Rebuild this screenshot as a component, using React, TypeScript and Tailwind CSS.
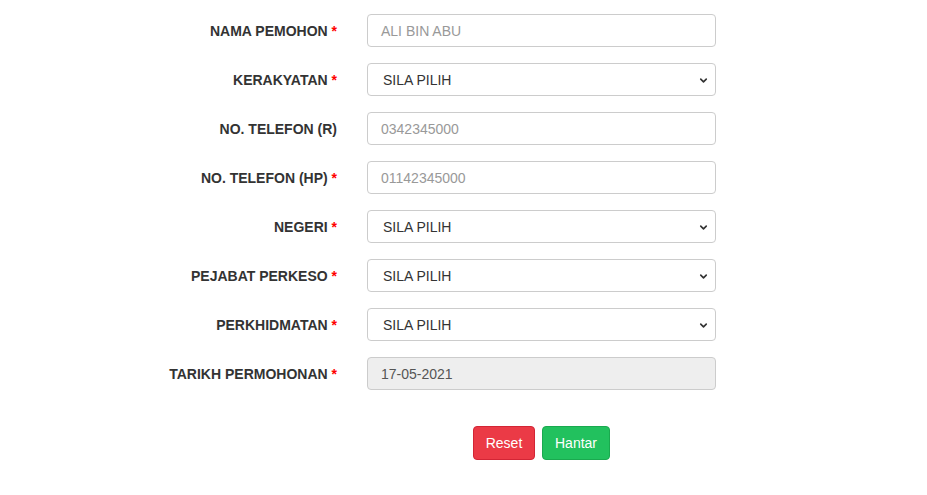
import { ChevronDown } from 'lucide-react';

type Field = {
  label: string;
  required: boolean;
  kind: 'text' | 'select' | 'disabled';
  value?: string;
};

const FIELDS: Field[] = [
  { label: 'NAMA PEMOHON', required: true, kind: 'text', value: 'ALI BIN ABU' },
  { label: 'KERAKYATAN', required: true, kind: 'select' },
  { label: 'NO. TELEFON (R)', required: false, kind: 'text', value: '0342345000' },
  { label: 'NO. TELEFON (HP)', required: true, kind: 'text', value: '01142345000' },
  { label: 'NEGERI', required: true, kind: 'select' },
  { label: 'PEJABAT PERKESO', required: true, kind: 'select' },
  { label: 'PERKHIDMATAN', required: true, kind: 'select' },
  { label: 'TARIKH PERMOHONAN', required: true, kind: 'disabled', value: '17-05-2021' },
];

function Control({ field }: { field: Field }) {
  if (field.kind === 'select') {
    return (
      <div className="relative w-[349px] h-[33px] rounded-[4px] border border-[#cccccc] bg-white flex items-center pl-[15px] pt-[1px] text-[14px] text-[#333]">
        SILA PILIH
        <ChevronDown className="absolute right-[6px] top-[11px] h-[11px] w-[11px] text-[#333]" strokeWidth={3.5} />
      </div>
    );
  }
  if (field.kind === 'disabled') {
    return (
      <div className="w-[349px] h-[33px] rounded-[4px] border border-[#cccccc] bg-[#eeeeee] flex items-center pl-[13px] pt-[1px] text-[14px] text-[#555]">
        {field.value}
      </div>
    );
  }
  return (
    <div className="w-[349px] h-[33px] rounded-[4px] border border-[#cccccc] bg-white flex items-center pl-[13px] pt-[1px] text-[14px] text-[#999]">
      {field.value}
    </div>
  );
}

export default function App() {
  return (
    <div className="w-[927px] h-[495px] bg-white pt-[14px]" style={{ fontFamily: '"Liberation Sans", Arial, sans-serif' }}>
      <div className="flex flex-col gap-[16px]">
        {FIELDS.map((f) => (
          <div key={f.label} className="flex items-center">
            <div className="w-[352px] pr-[15px] pt-[1px] text-right text-[14px] font-bold text-[#333]">
              {f.label}
              {f.required && <span className="text-[#ff0000]"> *</span>}
            </div>
            <div className="ml-[15px]">
              <Control field={f} />
            </div>
          </div>
        ))}
      </div>

      {/* Actions */}
      <div className="flex mt-[36px]">
        <div className="ml-[367px] w-[349px] flex justify-center gap-[7px]">
          <button className="w-[62px] h-[34px] rounded-[4px] border border-[#d32535] bg-[#eb3a46] text-white text-[14px]">
            Reset
          </button>
          <button className="w-[68px] h-[34px] rounded-[4px] border border-[#1aa94f] bg-[#22c15e] text-white text-[14px]">
            Hantar
          </button>
        </div>
      </div>
    </div>
  );
}
